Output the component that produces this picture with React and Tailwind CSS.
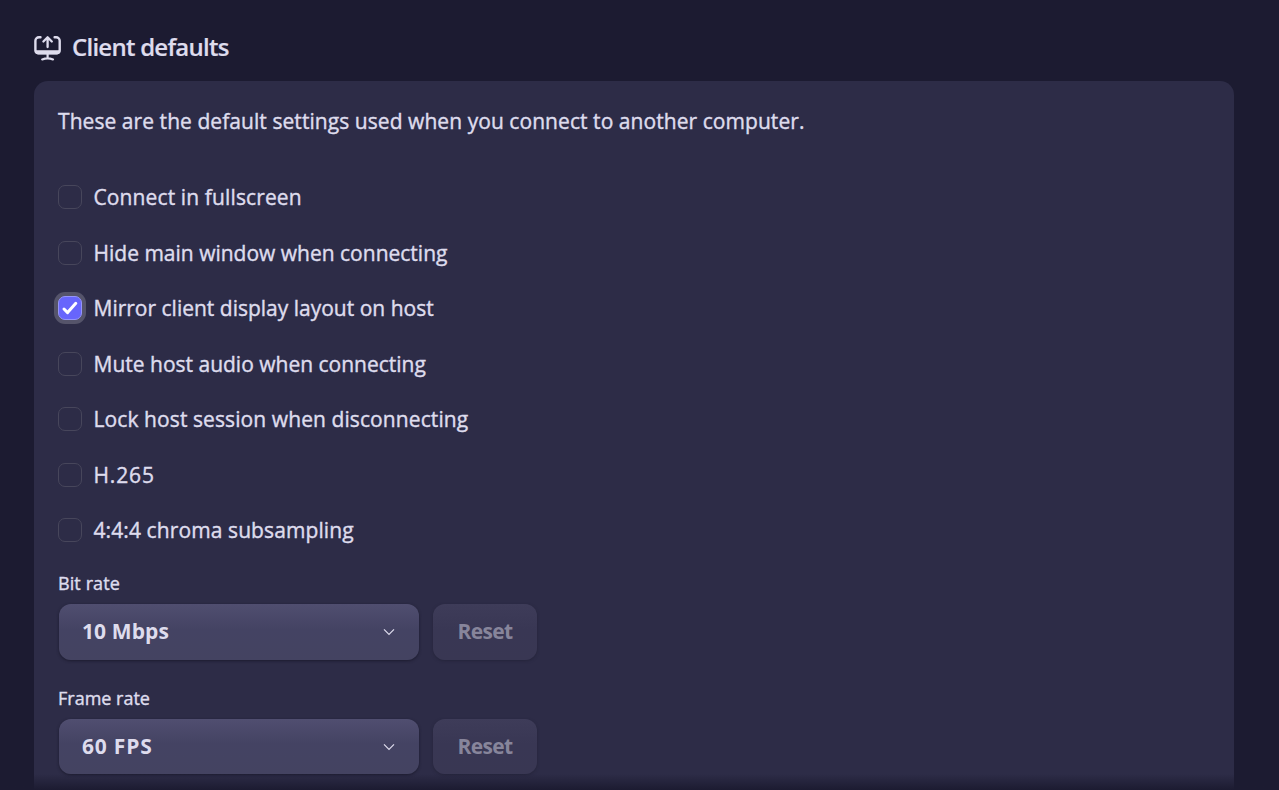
const options = [
  { label: "Connect in fullscreen", tracking: "tracking-[0.12px]" },
  { label: "Hide main window when connecting", tracking: "tracking-[0px]" },
  { label: "Mirror client display layout on host", checked: true, tracking: "tracking-[0px]" },
  { label: "Mute host audio when connecting", tracking: "tracking-[0px]" },
  { label: "Lock host session when disconnecting", tracking: "tracking-[0.09px]" },
  { label: "H.265", tracking: "tracking-[0.85px]" },
  { label: "4:4:4 chroma subsampling", tracking: "tracking-[0.1px]" },
];

function DisplayIcon() {
  return (
    <svg width="28" height="26" viewBox="0 0 28 26" fill="none" stroke="#dedced" strokeWidth="2.4" strokeLinecap="round" strokeLinejoin="round">
      <path d="M6.500 2.200H5a3.600 3.600 0 0 0-3.600 3.600v9.500A2.900 2.900 0 0 0 4.300 18.200h18.500a2.900 2.900 0 0 0 2.900-2.900V5.800a3.600 3.600 0 0 0-3.600-3.600h-1.500" />
      <path d="M1.500 15.800h24.100v.8a2.200 2.200 0 0 1-2.200 2.200H3.700a2.200 2.200 0 0 1-2.200-2.200z" fill="#dedced" strokeWidth="1" />
      <path d="M13.600 12V2.600M9.400 6.500l4.200-4.200 4.200 4.200" strokeWidth="2.300" />
      <path d="M13.600 19v4.500M8.200 24.400c3-1.200 7.800-1.200 10.800 0" strokeWidth="2.200" />
    </svg>
  );
}

function Checkbox({ checked }) {
  return (
    <span
      role="checkbox"
      aria-checked={!!checked}
      className={
        checked
          ? "flex size-6 shrink-0 items-center justify-center rounded-[7px] border border-[#9695fa] bg-[#6765fc] ring-4 ring-[#55546a]"
          : "size-6 shrink-0 rounded-[7px] border border-[#47465b]"
      }
    >
      {checked && (
        <svg width="18" height="14" viewBox="0 0 18 14" className="shrink-0" fill="none" stroke="white" strokeWidth="3" strokeLinecap="round" strokeLinejoin="round">
          <path d="M3 8l3.600 3.600L14.800 2.300" />
        </svg>
      )}
    </span>
  );
}

function RateField({ label, value, height, labelTracking, valueTracking }) {
  return (
    <div>
      <div className={`h-[30px] text-[18px] leading-[18px] whitespace-nowrap [-webkit-text-stroke:0.4px] ${labelTracking}`}>{label}</div>
      <div className={`flex gap-[14px] pl-px text-[21px] font-bold ${height}`}>
        <button className="flex w-[360px] items-center justify-between rounded-xl bg-linear-to-b from-[#504e70] via-[#444363] via-45% to-[#444361] pr-6 pl-[23px] shadow-[0_1px_3px_#1c1b2e]">
          <span className={valueTracking}>{value}</span>
          <svg width="12" height="8" viewBox="0 0 12 8" fill="none" stroke="#dedced" strokeWidth="1.200">
            <path d="M1 1.300l5 5 5-5" />
          </svg>
        </button>
        <button disabled className="w-[104px] rounded-xl bg-linear-to-b from-[#3e3c59] via-[#393754] via-45% to-[#393753] tracking-[-0.6px] text-[#87859b] shadow-[0_1px_3px_#25243a]">
          Reset
        </button>
      </div>
    </div>
  );
}

export default function App() {
  return (
    <main className="relative h-screen overflow-hidden bg-[#1c1b31] pt-[35px] pr-[45px] pl-[34px] font-['Open_Sans',sans-serif] font-medium text-[#dedced]">
      <header className="flex h-[46px] items-start gap-[10px]">
        <DisplayIcon />
        <h1 className="text-[24px] leading-[24px] font-semibold tracking-[-0.75px] whitespace-nowrap [-webkit-text-stroke:0.2px]">Client defaults</h1>
      </header>
      <section className="h-[760px] rounded-[14px] bg-[#2d2c47] px-6 pt-[26px]">
        <p className="h-[62.5px] text-[21px] leading-[28px] tracking-[0.06px] whitespace-nowrap [-webkit-text-stroke:0.4px]">
          These are the default settings used when you connect to another computer.
        </p>
        <div className="grid auto-rows-[55.5px]">
          {options.map((o) => (
            <label key={o.label} className="flex items-center gap-[11.5px] text-[21px] leading-[28px]">
              <Checkbox checked={o.checked} />
              <span className={`whitespace-nowrap [-webkit-text-stroke:0.4px] ${o.tracking}`}>{o.label}</span>
            </label>
          ))}
        </div>
        <div className="grid gap-[29px] pt-[16px]">
          <RateField label="Bit rate" value="10 Mbps" height="h-[56px]" labelTracking="tracking-[0.1px]" valueTracking="tracking-[0.1px]" />
          <RateField label="Frame rate" value="60 FPS" height="h-[55px]" labelTracking="tracking-[0px]" valueTracking="tracking-[0.8px]" />
        </div>
      </section>
      <div className="absolute inset-x-0 bottom-0 h-4 bg-linear-to-b from-transparent to-[#1c1b31]" />
    </main>
  );
}
